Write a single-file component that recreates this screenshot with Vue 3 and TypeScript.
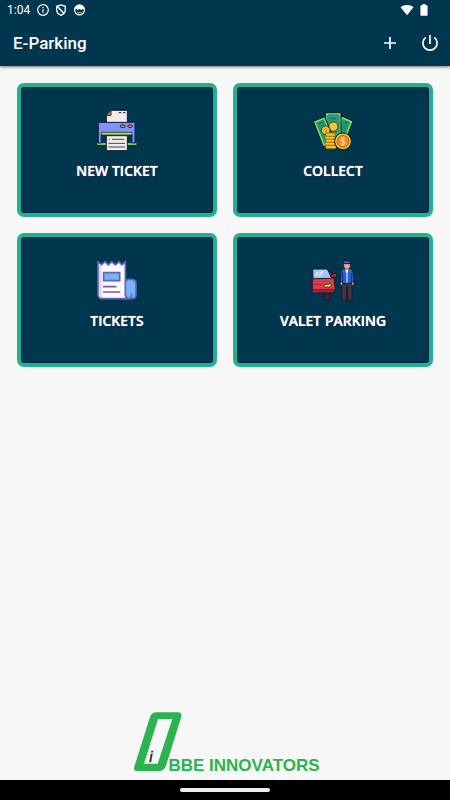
<script setup lang="ts">
type IconName = 'printer' | 'money' | 'receipt' | 'valet'

interface Action {
  label: string
  icon: IconName
  viewBox: string
}

const actions: Action[] = [
  { label: 'NEW TICKET', icon: 'printer', viewBox: '15 24 132 132' },
  { label: 'COLLECT', icon: 'money', viewBox: '18 24 132 132' },
  { label: 'TICKETS', icon: 'receipt', viewBox: '15 18 132 132' },
  { label: 'VALET PARKING', icon: 'valet', viewBox: '18 18 132 132' },
]
</script>

<template>
  <div class="screen">
    <header class="header">
      <div class="status">
        <span class="clock">1:04</span>
        <svg class="status-icon" viewBox="0 0 12 12" aria-hidden="true">
          <circle cx="6" cy="6" r="5.3" fill="none" stroke="#fff" stroke-width="1.2" />
          <path d="M6 5.2v3.5M6 3.1v1.2" stroke="#fff" stroke-width="1.2" />
        </svg>
        <svg class="status-icon" viewBox="0 0 12 12" aria-hidden="true">
          <path d="M6 .9 10.3 2.3V5.6C10.3 8.4 8.6 10.4 6 11.3 3.4 10.4 1.7 8.4 1.7 5.6V2.3Z" fill="none" stroke="#fff" stroke-width="1.3" />
          <path d="M2.500 2.500 9 9.500" stroke="#fff" stroke-width="1.500" />
        </svg>
        <svg class="status-icon" viewBox="0 0 12 12" aria-hidden="true">
          <circle cx="6.500" cy="6" r="4.900" fill="none" stroke="#fff" stroke-width="1.200" />
          <path d="M1.500 5.500A5 5 0 0 1 11.500 5.500L9.500 5 8.500 6 6.500 5 4.500 6 3.500 5Z" fill="#fff" />
          <path d="M4 8.800h5" stroke="#b9c8d0" />
        </svg>
        <span class="spacer"></span>
        <svg class="wifi" viewBox="0 0 14 12" aria-hidden="true">
          <path d="M.5 3.200C4.200.2 9.800.2 13.500 3.200L7 11.200Z" fill="#fff" />
        </svg>
        <svg class="battery" viewBox="0 0 8 12" aria-hidden="true">
          <path d="M2.500 0h3v1.200H7q.6 0 .6.700V11q0 .8-.7.800H1.100Q.4 11.800.4 11V1.900q0-.7.700-.7h1.400Z" fill="#fff" />
        </svg>
      </div>
      <div class="toolbar">
        <h1 class="title">E-Parking</h1>
        <button class="tool" type="button" aria-label="Add">
          <svg viewBox="0 0 20 20"><path d="M10 4v12M4 10h12" stroke="#fff" stroke-width="1.700" /></svg>
        </button>
        <button class="tool" type="button" aria-label="Log out">
          <svg viewBox="0 0 20 20">
            <path d="M10 2v9M5.700 4.400a7.100 7.100 0 1 0 8.600 0" fill="none" stroke="#fff" stroke-width="1.700" />
          </svg>
        </button>
      </div>
    </header>

    <main class="grid">
      <button v-for="action in actions" :key="action.label" class="card" type="button">
        <svg class="card-icon" :viewBox="action.viewBox" aria-hidden="true">
          <g v-if="action.icon === 'printer'" stroke="#10213c" stroke-width="3" stroke-linejoin="round">
            <path d="M49 68V46L63 31H112V68Z" fill="#f4ebe8" />
            <path d="M49 46 63 31V46Z" fill="#f5941f" />
            <path d="M86 38h8M99 38h7" />
            <path d="M21 129h119v6H21Z" fill="#a2e838" stroke-width="1" />
            <path d="M25 67H135V129H126V104H34V129H25Z" fill="#8490ff" />
            <path d="M34 106H126V127H34Z" fill="#00364e" stroke="none" />
            <path d="M34 97H126V105H34Z" fill="#a2e838" stroke-width="2" />
            <rect x="91" y="75" width="14" height="7" rx="3" fill="#ffaa22" />
            <rect x="114" y="75" width="13" height="7" rx="3" fill="#ffaa22" />
            <path d="M49 107H112V152H49Z" fill="#f4ebe8" />
            <path d="M56 118h3M66 118h37M55 130h50M55 141h50" stroke="#3f4656" />
          </g>

          <g v-else-if="action.icon === 'money'" stroke="#101923" stroke-width="3" stroke-linejoin="round">
            <path d="M144 63 110 48 82 125 115 140Z" fill="#78db72" />
            <path d="M136 67 113 57 89 120 112 130Z" fill="#219574" stroke="none" />
            <path d="M61 38H108V132H61Z" fill="#78db72" />
            <path d="M70 43H99L104 49V126H65V49Z" fill="#289d78" stroke="none" />
            <circle cx="85" cy="80" r="14" fill="#f6c531" stroke-width="2" />
            <path d="M76 55h17" stroke="#165f4c" />
            <path d="M25 64 59 50 90 126 55 141Z" fill="#78db72" />
            <path d="M33 68 56 58 82 122 59 132Z" fill="#219574" stroke="none" />
            <path d="M43 71l10-4M120 66l8 3" stroke="#165f4c" />
            <circle cx="62" cy="91" r="13" fill="#efc033" stroke-width="2" />
            <path d="m56 90 5-4 5 4-6 5 6 2-5 4" fill="none" stroke="#8f6a1c" stroke-width="2" />
            <g fill="#f9c328" stroke="#7b5917" stroke-width="2">
              <rect x="62" y="99" width="29" height="10" rx="3" />
              <rect x="60" y="109" width="30" height="9" rx="3" />
              <rect x="62" y="118" width="29" height="9" rx="3" />
              <rect x="60" y="127" width="31" height="9" rx="3" />
              <rect x="62" y="136" width="31" height="10" rx="3" />
            </g>
            <circle cx="114" cy="124" r="25" fill="#ffcc36" />
            <circle cx="114" cy="124" r="18" fill="#f28c28" stroke="#78451d" stroke-width="2" />
            <path d="M120 117q-5-4-10-1-5 6 4 8 10 3 4 9-5 3-11-2M114 110v28" fill="none" stroke="#ffe69a" stroke-width="3" />
          </g>

          <g v-else-if="action.icon === 'receipt'" stroke="#6464b6" stroke-width="5" stroke-linejoin="round" stroke-linecap="round">
            <path d="M106 88Q109 82 117 82H126Q138 83 138 95V130Q137 140 126 140H104V91Z" fill="#76b3fa" />
            <path d="M24 29 34 39 45 29 55 39 65 29 76 39 87 29 96 39 106 29V126Q106 135 113 140H35Q24 138 24 128Z" fill="#fff8fa" />
            <path d="M27 35V127Q28 137 38 137H45Q34 133 34 121V39Z" fill="#dcd7ee" stroke="none" />
            <path d="M41 62H89V86H41Z" fill="#76b3fa" stroke-linejoin="miter" />
            <path d="M41 104h36M41 120h48" fill="none" />
            <path d="M106 126q0 12 9 14 10-1 10-12" fill="none" />
          </g>

          <g v-else stroke="#151b34" stroke-width="3" stroke-linejoin="round">
            <path d="M56 122H78V136Q76 145 67 145 56 144 56 134Z" fill="#252639" />
            <circle cx="67" cy="135" r="6" fill="#5b2030" stroke="none" />
            <path d="M22 50H68L82 71 88 84 91 112 84 123H22Z" fill="#dc3c43" />
            <path d="M23 51H67L80 79 24 80Z" fill="#9cc8fa" />
            <path d="M32 71 40 60M42 72 53 58" stroke="#f4faff" stroke-width="4" />
            <path d="M78 68 91 64 95 69 92 76 79 75Z" fill="#bd2938" />
            <path d="M22 97h28" stroke="#9e2032" />
            <path d="M56 99 77 95 79 99 76 105H58Z" fill="#ffd53e" stroke-width="2" />
            <path d="M22 113H87V121H22Z" fill="#b92535" stroke-width="2" />
            <path d="M110 91H141V146H128V104H124V146H111Z" fill="#4b353e" />
            <path d="M106 86H113V100H106ZM139 86H146V100H139Z" fill="#e9a774" stroke-width="2" />
            <path d="M109 53 118 49H134L143 53 147 89H139V95H113V89H105Z" fill="#2363d8" />
            <path d="M120 48H132L130 60 126 65 121 60Z" fill="#f3f3f8" stroke-width="1" />
            <path d="M126 54V92" stroke="#eaf2ff" />
            <path d="M116 34H136V43Q135 51 126 52 117 51 116 43Z" fill="#f1ae7d" stroke-width="2" />
            <path d="M114 25H137V35H114Z" fill="#164aad" />
            <path d="M118 31h15" stroke="#3d90ff" stroke-width="2" />
            <path d="M113 62v25M139 62v25" stroke="#163780" />
          </g>
        </svg>
        <span>{{ action.label }}</span>
      </button>
    </main>

    <footer class="brand">
      <svg class="logo" viewBox="0 0 150 186" aria-hidden="true">
        <path fill-rule="evenodd" fill="#2bb34f" d="M72 4H135Q148 4 145 17L99 164Q93 180 78 180H13Q0 180 4 167L51 18Q55 4 72 4ZM75 24 33 158H74L118 24Z" />
        <text x="49" y="153" class="logo-letter">i</text>
      </svg>
      <span class="brand-name">BBE INNOVATORS</span>
    </footer>
    <div class="navigation"><span class="handle"></span></div>
  </div>
</template>

<style>
body {
  margin: 0;
  background: #f7f7f7;
}
</style>

<style scoped>
.screen {
  min-height: 100vh;
  display: flex;
  flex-direction: column;
  background: #f7f7f7;
  font-family: Roboto, sans-serif;
}

.header {
  background: #00364e;
  color: #fff;
  box-shadow: 0 1px 3px #0008;
}

.status {
  display: flex;
  align-items: center;
  gap: 6px;
  height: 20px;
  padding: 0 22px 0 7px;
}

.clock {
  font-size: 12px;
  line-height: 20px;
  margin-right: 1px;
}

.status-icon {
  width: 12px;
  height: 12px;
}

.spacer {
  flex: 1;
}

.wifi {
  width: 14px;
  height: 12px;
}

.battery {
  width: 8px;
  height: 12px;
}

.toolbar {
  display: flex;
  align-items: center;
  gap: 20px;
  height: 46px;
  padding: 0 10px 0 13px;
}

.title {
  flex: 1;
  margin: 0;
  font-size: 17px;
  line-height: 24px;
  font-weight: 500;
}

.tool {
  width: 20px;
  height: 20px;
  padding: 0;
  border: 0;
  background: none;
}

.tool svg {
  display: block;
}

.grid {
  display: grid;
  grid-template-columns: 1fr 1fr;
  gap: 16px;
  padding: 17px;
}

.card {
  display: flex;
  flex-direction: column;
  align-items: center;
  gap: 9px;
  height: 134px;
  padding: 21px 8px;
  border: 4px solid #22b090;
  border-radius: 7px;
  background: #00364e;
  box-shadow: inset 0 0 1px 1px #092449;
  color: #fff;
  font: 600 14px/20px "Open Sans", sans-serif;
  text-shadow: 0 0 1px #fff, 1px 1px 1px #06193a;
}

.card-icon {
  width: 44px;
  height: 44px;
}

.brand {
  display: flex;
  justify-content: center;
  align-items: flex-end;
  margin-top: auto;
  padding: 0 0 5px 3px;
}

.logo {
  width: 50px;
  height: 62px;
  margin: 0 -15px 2px 0;
}

.logo-letter {
  font: italic 400 44px "Liberation Sans", sans-serif;
  fill: #111;
  stroke: #111;
  stroke-width: 1px;
}

.brand-name {
  color: #2bb34f;
  font: 700 17px/18px "Liberation Sans", sans-serif;
}

.navigation {
  display: flex;
  align-items: center;
  justify-content: center;
  height: 20px;
  background: #000;
}

.handle {
  width: 20%;
  height: 4px;
  border-radius: 2px;
  background: #eee;
}
</style>
